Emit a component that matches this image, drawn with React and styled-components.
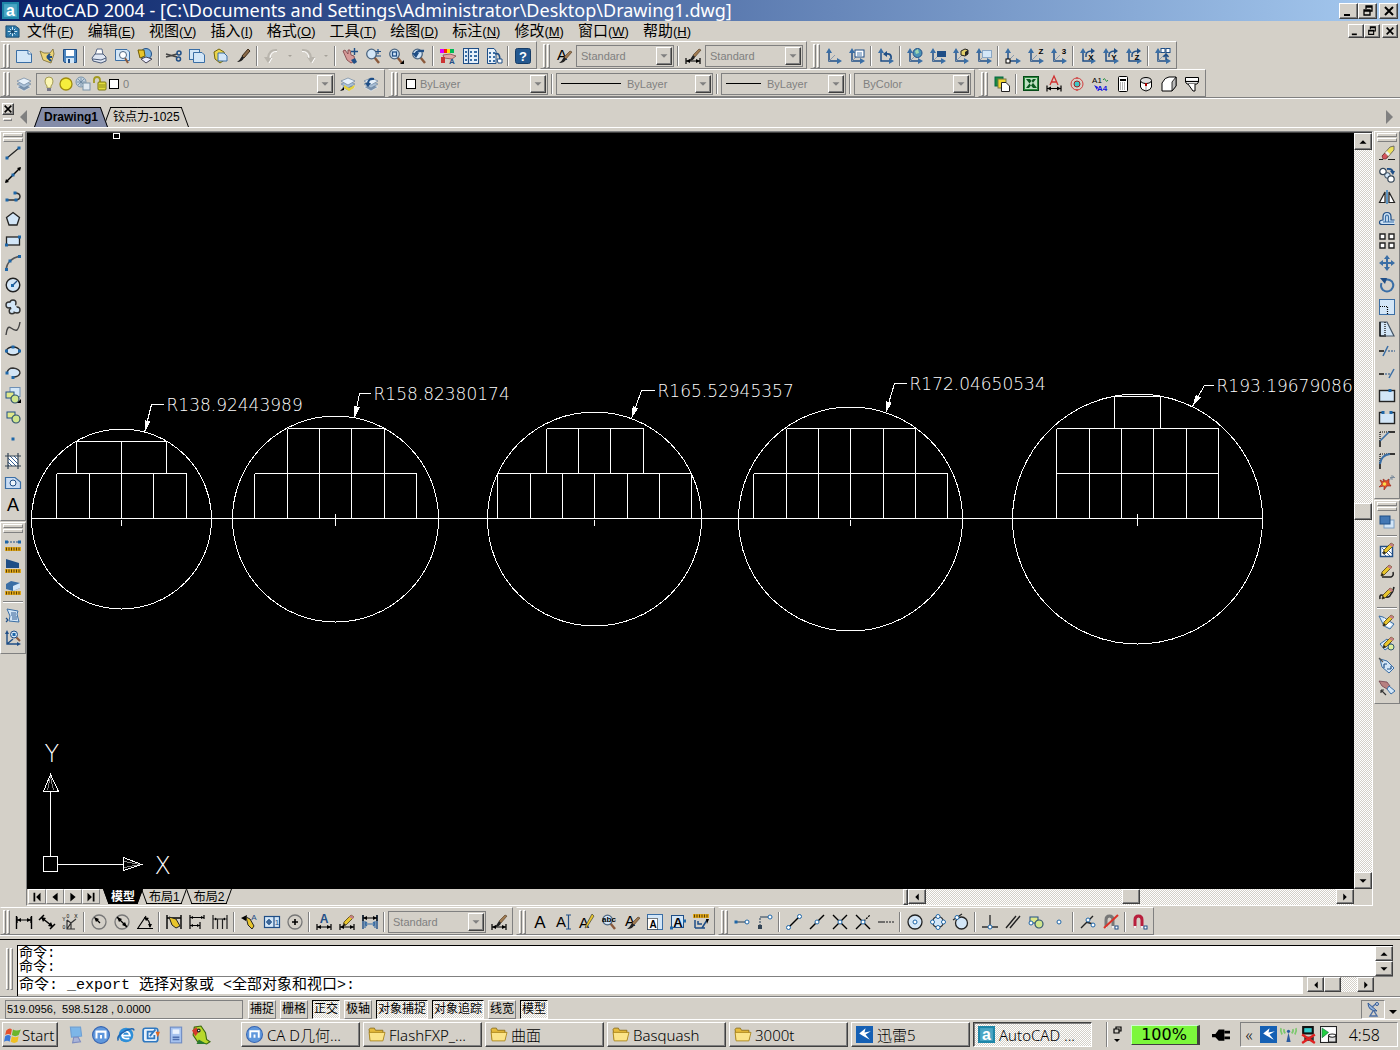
import React from 'react';
import styled, { createGlobalStyle, css } from 'styled-components';

const face = '#d4d0c8';
const shadow = '#808080';
const dark = '#404040';
const navy = '#1f4e86';
const blue = '#3a6ea5';
const pale = '#d3e6f7';
const gold = '#e8c52c';

const uiFont = '"Liberation Sans", "Noto Sans CJK SC", sans-serif';
const wideFont = '"DejaVu Sans", "Noto Sans CJK SC", sans-serif';
const taskFont = '"Noto Sans", "Noto Sans CJK SC", sans-serif';
const monoFont = '"Liberation Mono", "Noto Sans CJK SC", monospace';

const GlobalStyle = createGlobalStyle`
  * {
    box-sizing: border-box;
  }

  body {
    margin: 0;
    background: ${face};
    color: #000;
    font-family: ${uiFont};
    font-size: 12px;
  }

  button, select, input {
    margin: 0;
    padding: 0;
    border: 0;
    border-radius: 0;
    background: none;
    color: inherit;
    font: inherit;
  }
`;

const raised = css`
  border: 1px solid;
  border-color: #fff ${dark} ${dark} #fff;
  box-shadow: inset -1px -1px 0 ${shadow};
  background: ${face};
`;

const sunken = css`
  border: 1px solid;
  border-color: ${shadow} #fff #fff ${shadow};
`;

const dither = css`
  background: repeating-conic-gradient(#fff 0 25%, ${face} 0 50%) 0 0 / 2px 2px;
`;

/* ---------- icon parts ---------- */

const Dot = ({ x, y, c = '#1d66a8' }) => (
  <rect x={x - 1.5} y={y - 1.5} width="3" height="3" fill={c} />
);

const Ring = ({ x, y }) => (
  <circle cx={x} cy={y} r="2" fill="#fff" stroke="#1d66a8" />
);

const Line = ({ d, c = '#222', w = 1.2, f = 'none', dash }) => (
  <path d={d} stroke={c} strokeWidth={w} fill={f} strokeDasharray={dash} />
);

const Letter = ({ x = 8, y, s = 8, c = '#000', b, children }) => (
  <text
    x={x}
    y={y}
    fontSize={s}
    fill={c}
    fontWeight={b ? 700 : 400}
    textAnchor="middle"
    fontFamily="Liberation Sans"
  >
    {children}
  </text>
);

const Axes = ({ children, skew = true }) => (
  <>
    <Line d="M3 2V13H14" c={navy} w={1.5} />
    <path d="M0 5L3 0L6 5ZM11 10L16 13L11 16Z" fill={blue} />
    {skew && <Line d="M3 13L9 7" c="#8a9bb0" w={1} />}
    {children}
  </>
);

const Pencil = ({ c = gold }) => (
  <>
    <path d="M4 12L5 8L12 1L15 3L7 11Z" fill={c} stroke="#4a3b10" strokeWidth="0.8" />
    <path d="M12 1L15 3L14 5L10 3Z" fill="#c47f86" />
    <path d="M4 12L5 9L7 11Z" fill="#222" />
  </>
);

const Brush = () => (
  <>
    <path d="M14 1L16 2L10 9L8 7Z" fill="#a07a50" stroke="#4d3520" strokeWidth="0.6" />
    <path d="M8 7L10 9Q9 13 3 13Q6 11 8 7Z" fill="#222" />
  </>
);

const Dim = ({ y = 12.5 }) => (
  <>
    <Line d={`M1 ${y - 3}V${y + 3}M15 ${y - 3}V${y + 3}M1 ${y}H15`} c="#000" />
    <path
      d={`M1 ${y}L5 ${y - 2}V${y + 2}ZM15 ${y}L11 ${y - 2}V${y + 2}Z`}
      fill="#000"
    />
  </>
);

const Lens = ({ children }) => (
  <>
    <Line d="M9.500 9.500L14 15" c="#8b5a3c" w={2.4} />
    <circle cx="6.500" cy="6" r="4.800" fill={pale} stroke="#4d6680" strokeWidth="1.300" />
    {children}
  </>
);

const Sheets = () => (
  <>
    <path d="M1 11L8 8L15 11L8 15Z" fill="#7a92ad" stroke="#fff" strokeWidth="0.500" />
    <path d="M1 8L8 5L15 8L8 12Z" fill="#a9bfd6" stroke="#5a7694" strokeWidth="0.500" />
    <path d="M1 5L8 2L15 5L8 9Z" fill="#e6f0fa" stroke="#5a7694" strokeWidth="0.600" />
  </>
);

const Ruler = () => (
  <>
    <rect x="0" y="11" width="16" height="4" fill="#e0a81c" />
    <Line d="M1 13H16" c="#5a3d00" w={3} dash="1 1.500" />
  </>
);

const Magnet = ({ c }) => (
  <>
    <Line d="M3 14V6Q3 2 6.500 2Q10 2 10 6V14" c={c} w={3} />
    <Line d="M3 12V14M10 12V14" c="#eee" w={3} />
    <rect x="12" y="12" width="3" height="3" fill="#fff" stroke={navy} />
  </>
);

const Shapes = () => (
  <>
    <rect x="2" y="3" width="8" height="6" fill="#dfe88a" stroke={navy} />
    <circle cx="11" cy="10" r="4" fill="#cfe58d" stroke="#31566f" strokeWidth="1.200" />
  </>
);

const icons = {
  // standard
  new: <><path d="M0.500 2.500H12L15.500 6V14.500H0.500Z" fill={pale} stroke={blue} /><path d="M12 2.500V6H15.500" fill="#fff" stroke={blue} /></>,
  open: <><path d="M1 3L5 5H11L14 1L15 6L12 15L4 12Z" fill="#ecd477" stroke="#7a6a30" strokeWidth="0.800" /><Line d="M8 9H13M8 9L11 6M8 9L12 13" c={navy} w={2} /></>,
  save: <><path d="M1.500 1.500H14.500V14.500H2.500L1.500 13Z" fill="#4d86bf" stroke={navy} /><rect x="4" y="2" width="8" height="6" fill="#fff" /><rect x="4" y="10" width="8" height="5" fill={pale} /><rect x="6" y="11" width="2" height="4" fill={navy} /></>,
  print: <><path d="M4 7L6 1H11L12 7Z" fill="#fff" stroke="#5b6b88" /><path d="M1 10L4 6H12L15 9V13L10 15L2 13Z" fill="#dfe6f2" stroke="#4a5a78" /><Line d="M2 11L10 12L15 10" c="#4a5a78" w={1} /></>,
  preview: <><path d="M1.500 1.500H13L15.500 4V12.500H1.500Z" fill={pale} stroke={blue} /><Line d="M11 10L14 15" c="#8b5a3c" w={2} /><circle cx="9" cy="7" r="3.500" fill="#fff" stroke="#4d6680" /></>,
  publish: <><circle cx="9" cy="6" r="5.500" fill="#7ab0dd" stroke={navy} /><path d="M1 2H7L8 8L3 10Z" fill={gold} stroke="#705a00" /><path d="M4 11L9 9L15 11L9 15Z" fill="#eef" stroke="#445" /></>,
  cut: <><Line d="M0 6L11 9M0 9L11 6" c="#444" w={1.500} /><circle cx="13" cy="5" r="2" fill="none" stroke={navy} strokeWidth="1.500" /><circle cx="12.500" cy="11" r="2" fill="none" stroke={navy} strokeWidth="1.500" /></>,
  copy: <><rect x="0.500" y="1.500" width="10" height="10" fill={pale} stroke={blue} /><path d="M4.500 4.500H13L15.500 7V14.500H4.500Z" fill={pale} stroke={blue} /></>,
  paste: <><path d="M2 4L7 1L12 4L14 11L8 15L3 11Z" fill="#ecd64c" stroke="#74650c" /><path d="M6 5H12L15 8V13H6Z" fill={pale} stroke={blue} /></>,
  match: <><path d="M13 1L15 3L9 10L7 8Z" fill="#8a6a48" stroke="#3c2a18" /><path d="M7 8L9 10Q7 14 2 14Q5 12 7 8Z" fill="#222" /></>,
  undo: <><Line d="M13 2Q5 1 4 10" c="#b9b5ad" w={2} /><path d="M0 9H8L4 15Z" fill="#b9b5ad" /><Line d="M13 3.500Q7 3 6 10M5 15L8 10" c="#fff" w={1} /></>,
  redo: <><Line d="M2 2Q10 1 11 10" c="#b9b5ad" w={2} /><path d="M7 9H15L11 15Z" fill="#b9b5ad" /><Line d="M2 3.500Q8 3 9 10M12 15L15 10" c="#fff" w={1} /></>,
  small: <path d="M6 7H10L8 9Z" fill="#a5a199" />,
  pan: <><path d="M1 3L3 2L6 6L6 2L8 2L9 7L12 8L13 13L9 15L5 12Z" fill="#d59a98" stroke="#7a3d42" strokeWidth="0.800" /><path d="M9 12L13 10L15 14L12 16Z" fill={navy} /><Line d="M12.500 0V7M9 3.500H16" c={navy} w={1.400} /></>,
  zoom: <Lens><Line d="M13 1V6M10.500 3.500H16M11 8H16" c={navy} w={1.200} /></Lens>,
  zoomwin: <Lens><rect x="4.500" y="4" width="4" height="4" fill={pale} stroke={navy} strokeWidth="1.300" /><path d="M16 12V16H12Z" /></Lens>,
  zoomprev: <Lens><Line d="M4 7Q5 2 13 3" c={navy} w={2.400} /><path d="M1 5L8 5L5 10Z" fill={navy} /></Lens>,
  props: <><path d="M0 1H4V5H0Z" fill="#d0f" /><path d="M4 1H7V5H4Z" fill="#f20" /><path d="M7 1H10V5H7Z" fill="#fd0" /><path d="M10 1H14V5H10Z" fill="#0b5" /><path d="M3 7L10 6L16 8L12 11L4 10Z" fill="#e3a7a4" stroke="#7a3d42" strokeWidth="0.700" /><path d="M1 9H5V15H1Z" fill="#c33" /><Letter x={12} y={16} s={8} c={navy} b>A</Letter></>,
  center: <><rect x="0.500" y="0.500" width="15" height="15" fill="#e6f0fa" stroke={navy} /><Line d="M5.500 1V15" c={navy} />{[3, 7, 11].map(y => <path key={y} d={`M2 ${y}h2v2h-2zM7 ${y}h2v2h-2zM11 ${y}h3v2h-3z`} fill={blue} />)}</>,
  palette: <><path d="M1.500 0.500H8L10 3V15.500H1.500Z" fill="#e6f0fa" stroke={navy} />{[4, 8, 12].map(y => <path key={y} d={`M3 ${y}h2v2h-2zM7 ${y}h2v2h-2z`} fill={blue} />)}<Line d="M9 6Q14 4 14 12" c={navy} w={1.600} /><path d="M11 11H16V15H12Z" fill="#fff" stroke={navy} /></>,
  help: <><rect x="0.500" y="0.500" width="15" height="15" rx="2" fill="#24588f" stroke="#163c66" /><Letter y={13} s={13} c="#fff" b>?</Letter></>,
  // styles
  textstyle: <><Letter x={6} y={12} s={15}>A</Letter><g transform="translate(0 2)"><Brush /></g></>,
  dimstyle: <><Brush /><Dim y={13} /></>,
  // ucs
  ucs: <Axes />,
  ucsdlg: <Axes><rect x="6" y="2" width="9" height="7" fill="#fff" stroke={navy} /><Line d="M8 5H13M8 7H13" c={blue} w={0.9} /></Axes>,
  ucsprev: <Axes skew={false}><Line d="M13 11Q14 5 8 6" c={navy} w={1.800} /><path d="M5 6L9 3V9Z" fill={navy} /></Axes>,
  ucsworld: <Axes><circle cx="10.500" cy="5" r="4.500" fill="#4b93b5" stroke={navy} /><path d="M8 3L11 1L12 5L9 6Z" fill="#9fd6b0" /></Axes>,
  ucsobj: <Axes><rect x="7" y="3" width="9" height="6" fill={navy} /></Axes>,
  ucsface: <Axes><path d="M8 3L12 1L15 2V6L12 8L8 7Z" fill="#e2cf6a" stroke="#222" /><path d="M12 4V8L15 6V2Z" fill="#222" /></Axes>,
  ucsview: <Axes><rect x="6.500" y="2.500" width="9" height="7" fill={pale} stroke="#8aa6c4" /></Axes>,
  ucsorigin: <Axes><rect x="1" y="11" width="4" height="4" fill="#fff" stroke="#000" /></Axes>,
  ucsz: <Axes><Letter x={13} y={6} s={8} b>Z</Letter></Axes>,
  ucs3: <Axes><Letter x={13} y={6} s={8} b>3</Letter></Axes>,
  ucsx: <Axes skew={false}><Line d="M6 9Q5 3 12 3" c={navy} w={1.500} /><path d="M11 0L15 3L11 6Z" fill={navy} /><Letter x={11} y={12} b>X</Letter></Axes>,
  ucsy: <Axes skew={false}><Line d="M6 9Q5 3 12 3" c={navy} w={1.500} /><path d="M11 0L15 3L11 6Z" fill={navy} /><Letter x={11} y={12} b>Y</Letter></Axes>,
  ucszz: <Axes skew={false}><Line d="M6 9Q5 3 12 3" c={navy} w={1.500} /><path d="M11 0L15 3L11 6Z" fill={navy} /><Letter x={11} y={12} b>Z</Letter></Axes>,
  ucsapply: <Axes><rect x="6" y="0.500" width="4" height="4" fill="#fff" stroke={navy} /><rect x="11" y="0.500" width="4" height="4" fill="#fff" stroke={navy} /><Line d="M11 12V7M8.500 9L11 6L13.500 9" c={navy} w={1.500} /></Axes>,
  // layers
  layers: <Sheets />,
  laycur: <><Sheets /><path d="M4 9L9 12L15 9L14 12L9 15L4 12Z" fill="#e6d23c" /><path d="M0 15L4 11V14Z" fill="#000" /></>,
  layprev: <><Sheets /><Line d="M5 8Q5 2 11 3" c={navy} w={2.200} /><path d="M2 7H8L5 11Z" fill={navy} /></>,
  bulb: <><path d="M4 5Q4 1 8 1Q12 1 12 5Q12 8 10 10V12H6V10Q4 8 4 5Z" fill="#fbf6b4" stroke="#a39b52" /><path d="M6 12H10V15H6Z" fill="#778" /></>,
  sun: <circle cx="8" cy="8" r="6" fill="#f6ee3c" stroke="#a08c10" strokeWidth="1.300" />,
  freeze: <><circle cx="6" cy="6" r="5" fill="#c3d3df" stroke="#7b93a8" /><Line d="M6 2V10M2 6H10M3 3L9 9M9 3L3 9" c="#6b86a0" w={0.8} /><rect x="8" y="7" width="7" height="7" fill="#dfe8ef" stroke="#7b93a8" /></>,
  lock: <><Line d="M2 7V4Q2 1 5 1Q8 1 8 4V8" c="#a39a20" w={1.800} /><rect x="6" y="6" width="8" height="8" rx="1" fill="#e2dc3e" stroke="#7c7610" /><Line d="M7 9H13M7 11H13" c="#7c7610" w={0.8} /></>,
  // express
  sheetset: <><rect x="1" y="1" width="8" height="9" fill="#1d8a3c" stroke="#064" /><rect x="4" y="3" width="8" height="9" fill="#f1d531" stroke="#774" /><path d="M7.500 6.500H12L15.500 10V15.500H7.500Z" fill="#fff" stroke="#222" /></>,
  excel: <><rect x="0.500" y="0.500" width="15" height="14" fill="#2c8a3e" stroke="#064a18" /><rect x="2" y="2" width="12" height="11" fill="#bfe0c2" /><path d="M3 3H7L14 12H10ZM13 3H10L3 12H6Z" fill="#0b5a20" /></>,
  dimtext: <><Line d="M4 9L8 0L12 9M5.500 6H10.500" c="#d03030" w={1.300} /><Dim y={12.500} /></>,
  target: <><circle cx="8" cy="8" r="6" fill="none" stroke="#d04040" /><circle cx="8" cy="8" r="3" fill="#3fc8c8" stroke="#a02020" /><Line d="M8 1V3M8 13V15" c="#d04040" /></>,
  a1a4: <><Letter x={5} y={7} s={8}>A1</Letter><Line d="M11 4Q12.500 1 13.500 4T16 4" c="#2a9040" w={1} /><Letter x={10} y={15} s={8} c="#1414e0" b>A4</Letter><path d="M2 9L5 14L6 11Z" fill="#1414e0" /></>,
  calc: <><rect x="3.500" y="0.500" width="9" height="15" rx="1" fill="#fff" stroke="#000" /><path d="M5 3H11V5H5Z" fill="#000" />{[7, 9, 11, 13].map(y => <Line key={y} d={`M5 ${y}H11`} c="#666" w={1} dash="1 1" />)}</>,
  tank: <><path d="M2.500 5V11Q3 14 8 15Q13 14 13.500 11V5Z" fill="#fff" stroke="#000" /><ellipse cx="8" cy="4.500" rx="5.500" ry="3" fill="#ddd" stroke="#000" /><path d="M7 7H9V10H7Z" fill="#a00" /><Line d="M8 10V14" c="#aaa" /></>,
  solid: <><path d="M1 15V7Q4 1 8 1H15V10L11 15Z" fill="#fff" stroke="#000" /><path d="M11 15V6L15 1V10Z" fill="#bbb" stroke="#000" strokeWidth="0.800" /></>,
  funnel: <><path d="M1.500 1.500H14.500V6L13 8H3L1.500 6Z" fill="#fff" stroke="#000" /><path d="M4 8L9 15H11V8" fill="#fff" stroke="#000" /><Line d="M1.500 5.500H14.500" c="#000" /></>,
  // draw
  line: <><Line d="M2 13L14 3" /><Dot x={2} y={13} /><Dot x={14} y={3} /></>,
  xline: <><Line d="M1 15L15 1" c="#000" w={1.500} /><path d="M16 0L15 4L12 1ZM0 16L1 12L4 15Z" /><Dot x={8} y={8} /></>,
  pline: <><Line d="M2 11H10Q15 11 15 7.500Q15 4 10 4" c="#333" w={1.500} /><Dot x={2} y={11} /><Dot x={11} y={11} /><Dot x={10} y={4} /></>,
  polygon: <path d="M8 1.500L14.500 6.500L12 14H4L1.500 6.500Z" fill={pale} stroke="#222" strokeWidth="1.300" />,
  rect: <><rect x="1.500" y="4" width="13" height="8" fill={pale} stroke="#222" strokeWidth="1.300" /><Dot x={1.500} y={12} /><Dot x={14.500} y={4} /></>,
  arc: <><Line d="M1 15Q2 4 15 1" c="#555" w={1.400} /><Dot x={1.500} y={14.500} /><Dot x={5} y={6} /><Dot x={14.500} y={1.500} /></>,
  circle: <><circle cx="8" cy="8" r="6.800" fill={pale} stroke="#222" strokeWidth="1.400" /><Line d="M8 8L12 4" c={navy} /><Dot x={7.500} y={8.500} /></>,
  cloud: (
    <>
      <g fill={pale} stroke="#333" strokeWidth="1.400">
        <circle cx="4" cy="6" r="3" />
        <circle cx="8" cy="4" r="3" />
        <circle cx="7" cy="12" r="2.800" />
        <circle cx="12" cy="11" r="3" />
      </g>
      <path d="M4 4L8 3L11 7L13 11L11 13L7 12L6 8L3 7Z" fill={pale} />
    </>
  ),
  spline: <Line d="M1 14Q2 4 6 7T12 9Q14 7 15 1" c="#444" w={1.400} />,
  ellipse: <><ellipse cx="8" cy="8" rx="6.500" ry="4" fill={pale} stroke="#222" strokeWidth="1.300" /><Dot x={1.500} y={8} /><Dot x={14.500} y={8} /><Dot x={8} y={4} /></>,
  earc: <><path d="M2 8Q3 3 8 3Q15 4 15 8Q14 12 8 12" fill={pale} stroke="#333" strokeWidth="1.300" /><Dot x={2} y={8} /><Dot x={8} y={12.500} /></>,
  insert: <><rect x="5" y="0.500" width="10" height="9" fill={pale} stroke="#6d8fb5" /><g transform="translate(-1 2)"><Shapes /></g><path d="M16 12V16H12Z" /></>,
  block: <Shapes />,
  point: <Dot x={8} y={8} />,
  hatch: <><rect x="3" y="3" width="10" height="10" fill="#fff" /><Line d="M3 5L11 13M3 9L7 13M5 3L13 11M9 3L13 7M3 12L4 13" c={navy} w={0.9} /><Line d="M0 3H16M0 13H16M3 0V16M13 0V16" c="#345" w={1.200} /></>,
  region: <><path d="M0.500 2.500H10L15.500 7V13.500H0.500Z" fill="#c9dcf3" stroke={blue} strokeWidth="1.200" /><circle cx="8" cy="8" r="3" fill="#eef5fc" stroke={navy} /></>,
  mtext: <Letter y={14} s={18}>A</Letter>,
  // inquiry
  dist: <><Line d="M2 6H14" c={navy} dash="2 1" /><Dot x={1.500} y={6} /><Dot x={14.500} y={6} /><Ruler /></>,
  area: <><path d="M1 1L14 5V10H1Z" fill={navy} /><Ruler /></>,
  mass: <><path d="M1 4L6 1L15 3V8L8 11L1 9Z" fill={blue} /><path d="M8 6L15 3V8L8 11Z" fill={pale} /><Ruler /></>,
  list: <><path d="M2 1L13 3L12 6L14 14L4 13L5 8Z" fill={pale} stroke={blue} /><Line d="M6 5H11M6 7H11M7 9H12M7 11H12" c={navy} w={0.9} /><Line d="M1 10L3 12M1 14L3 12" c={navy} /></>,
  id: <><Line d="M2 2V14H14M2 14L8 9" c={navy} w={1.400} /><path d="M0 4L2 0L4 4ZM12 12L16 14L12 16Z" fill={navy} /><Line d="M11 7L15 11" c="#8b5a3c" w={2} /><circle cx="9" cy="4.500" r="3.500" fill={pale} stroke={navy} /><Dot x={9} y={4.500} /></>,
  // modify
  erase: <><path d="M3 11L11 2L15 1V5L8 13Z" fill="#ece05c" stroke="#555" strokeWidth="0.800" /><path d="M3 11L6 8L9 11L7 14L4 14Z" fill="#d3545c" stroke="#622" strokeWidth="0.600" /><path d="M6 8L8 6L11 9L9 11Z" fill="#eee" /><Line d="M0 14.500H4M9 14.500H16" c="#222" w={1} /></>,
  copyobj: <><circle cx="4" cy="4.500" r="3.200" fill="#fff" stroke="#345" strokeWidth="1.200" /><circle cx="8.500" cy="8.500" r="2.800" fill={pale} stroke="#345" /><circle cx="12" cy="12" r="3.200" fill="#fff" stroke="#345" strokeWidth="1.200" /><Line d="M8 2Q13 1 14 5" c={navy} w={1.800} /><path d="M11 4H16L14 8Z" fill={navy} /></>,
  mirror: <><path d="M6 3V13.500H0.500ZM10 3V13.500H15.500Z" fill="#fff" stroke="#222" strokeWidth="1.200" /><Line d="M8 1V15" c="#2a7bc0" w={1.400} /></>,
  offset: <><path d="M15.500 13.500H3Q0.500 13.500 0.500 11.500Q0.500 9 4 9V6Q4 1.500 8 1.500Q12 1.500 12 6V9H15.500" fill="#cfe3f5" stroke={navy} strokeWidth="1.200" /><Line d="M15 11H4M6.500 11V6.500Q6.500 4 8 4Q9.500 4 9.500 6.500V11" c={blue} w={1.200} /></>,
  array: <path d="M1 1H6V6H1ZM10 1H15V6H10ZM1 10H6V15H1ZM10 10H15V15H10Z" fill="#fff" stroke="#222" strokeWidth="1.400" />,
  move: <><Line d="M8 2V14M2 8H14" c={blue} w={2} /><path d="M8 0L11 4H5ZM8 16L11 12H5ZM0 8L4 5V11ZM16 8L12 5V11Z" fill={blue} /></>,
  rotate: <><Line d="M5 3.500Q9 1 13 4.500Q16 9 12 13Q8 16 4 13Q1 10 2.500 6" c={blue} w={2} /><path d="M1 1L8 1L6 7Z" fill={navy} /></>,
  scale: <><rect x="0.500" y="0.500" width="15" height="15" fill={pale} stroke={blue} /><Line d="M1 7.500H8.500V15" c="#000" dash="1 1" /></>,
  stretch: <><path d="M1 1H8L15 15H1Z" fill={pale} stroke="#456" strokeWidth="1.200" /><Line d="M6 1V15" c="#000" dash="1 1" /><Line d="M1 1V15H7" c="#000" /></>,
  trim: <><Line d="M0 8H5" c="#000" w={1.400} /><Line d="M9 8H16" c={navy} dash="2 1" /><Line d="M4 13L9 3" c={blue} w={1.500} /></>,
  extend: <><Line d="M0 9H5" c="#000" w={1.400} /><Line d="M6 9H11" c={navy} dash="2 1" /><Line d="M10 13L15 4" c={blue} w={1.500} /></>,
  breakpt: <><rect x="0.500" y="3.500" width="15" height="11" fill={pale} stroke="#222" strokeWidth="1.400" /><Dot x={11} y={3.500} /></>,
  break: <><rect x="0.500" y="3.500" width="15" height="11" fill={pale} stroke="#222" strokeWidth="1.400" /><path d="M5 2H11V5H5Z" fill={face} /><Dot x={4} y={3.500} /><Dot x={12} y={3.500} /></>,
  chamfer: <><Line d="M1 1H9M1 1V9" c="#000" dash="1 1" /><Line d="M9 1H16M1 9V16" c="#000" w={1.400} /><Line d="M1 10L10 1" c={blue} w={1.600} /></>,
  fillet: <><Line d="M1 1H9M1 1V9" c="#000" dash="1 1" /><Line d="M9 1H16M1 9V16" c="#000" w={1.400} /><Line d="M1 11Q2 2 11 1" c={blue} w={2} /></>,
  explode: <><path d="M4 4L7 6L10 4L10 8L12 11L8 11L5 15L5 11L0 12L3 9L1 5L5 7Z" fill="#e2502c" stroke="#8a1c10" strokeWidth="0.600" /><circle cx="5.500" cy="9" r="1.800" fill="#f8dc4c" /><Line d="M10 5L15 1M13 0V5M11 2.500H16" c="#789" w={0.9} /></>,
  // modify II
  order: <><rect x="5" y="6" width="10" height="8" fill={pale} stroke="#7c9ec2" /><rect x="1" y="2" width="10" height="8" fill="#4478b4" stroke={navy} /></>,
  edhatch: <><rect x="1.500" y="4.500" width="12" height="10" fill="#fff" stroke={navy} strokeWidth="1.500" /><Line d="M3 6L11 14M3 10L7 14M7 6L13 12" c={navy} w={0.8} /><Pencil /></>,
  edpline: <><Line d="M3 13H12Q15 12 14 8" c="#222" w={1.500} /><g transform="translate(-2 0)"><Pencil /></g></>,
  edspline: <><Line d="M1 13Q0 7 5 10T12 8Q14 6 15 1" c="#222" w={1.600} /><g transform="translate(-1 1)"><Pencil /></g></>,
  edattr: <><path d="M0 2L4 3L15 10L11 15L5 12Z" fill={pale} stroke={blue} /><path d="M5 4L13 11L10 13L5 10Z" fill="#fff" /><Pencil /></>,
  blkattr: <><path d="M1 8L8 3L13 9L6 14Z" fill={pale} stroke={blue} /><Pencil /><circle cx="12" cy="11" r="3" fill="#dcee9c" stroke="#31566f" /></>,
  sync: <><path d="M1 1L8 3L15 10L10 15L3 9Z" fill={pale} stroke={blue} /><Line d="M5 6V10M5 6H8M12 11H8M12 11V8" c={navy} /><Line d="M0 0L4 4" c="#555" /></>,
  extract: <><path d="M0 1L8 2L11 6L8 9L3 6Z" fill="#b88080" stroke="#634" strokeWidth="0.700" /><path d="M10 6L16 11L12 14L8 9Z" fill={pale} stroke={blue} /><Line d="M7 15L2 10M2 10V13M2 10H5" c="#333" /></>,
  // dimension
  dlin: <><Line d="M0.500 2V15M15.500 2V15" c="#000" w={1.400} /><Dim y={6} /></>,
  dali: <><Line d="M0 6L5 1M11 15L16 10M3 4L13 12" c="#000" w={1.500} /><path d="M2 3L7 4L4 8ZM14 13L9 12L12 8Z" /></>,
  dord: <><Line d="M5 6V15H13M5 15L9 9L14 5M5 6L9 9V15" c="#333" /><Letter x={2} y={7} s={5}>Y</Letter><Letter x={2} y={15} s={5}>0</Letter><Letter x={6} y={4} s={5}>0</Letter><Letter x={14} y={4} s={5}>X</Letter></>,
  drad: <><circle cx="8" cy="8" r="7" fill="none" stroke="#777" strokeWidth="1.300" /><Line d="M9 9L5 5" c="#000" /><path d="M3 3L8 5L5 8Z" /></>,
  ddia: <><circle cx="8" cy="8" r="7" fill="none" stroke="#777" strokeWidth="1.300" /><Line d="M3 3L13 13" c="#000" /><path d="M3 3L8 5L5 8ZM13 13L8 11L11 8Z" /></>,
  dang: <><Line d="M0 14.500H16M1 14L9 2M8 4Q13 6 13 13" c="#000" /><path d="M7 3L12 4L9 7ZM13 14L11 10H15Z" /></>,
  dquick: <><Line d="M1 1V15M15 1V15M1 4H15" c="#000" w={1.400} /><path d="M3 3L10 5L14 12L10 14L6 11Z" fill={gold} stroke="#222" /></>,
  dbase: <><Line d="M1 1V15M11 8V15M15 1V5M1 3.500H15M1 11.500H11" c="#000" /><path d="M1 3.500L4 2V5ZM15 3.500L12 2V5ZM1 11.500L4 10V13ZM11 11.500L8 10V13Z" /></>,
  dcont: <><Line d="M1 1V15M5.500 5V15M10.500 5V15M15 1V15M1 5H15" c="#222" /><path d="M5 5L3 3.500V6.500ZM11 5L13 3.500V6.500Z" /></>,
  leader: <><path d="M0 4L6 1L5 7Z" /><path d="M5 3L9 5L13 12L11 15L7 11Z" fill={gold} stroke="#222" /><Letter x={13} y={6} s={8} c={navy}>A</Letter></>,
  tol: <><rect x="0.500" y="2.500" width="15" height="11" fill={pale} stroke={navy} strokeWidth="1.200" /><Line d="M10 3V13M2 8H8M5 5V11" c={navy} /><circle cx="5" cy="8" r="2" fill="none" stroke={navy} /><Letter x={13} y={11} s={8} c={navy}>1</Letter></>,
  cmark: <><circle cx="8" cy="8" r="7" fill="none" stroke="#777" strokeWidth="1.300" /><Line d="M8 5V11M5 8H11" c="#000" w={1.600} /></>,
  dedit: <><Letter y={9} s={12} c={navy} b>A</Letter><Dim y={13} /></>,
  dtedit: <><Pencil /><Dim y={13} /></>,
  dupd: <><Line d="M1 1V15M15 1V15" c={navy} w={1.400} /><Dim y={4} /><Line d="M3 10H13M5 8L3 10L5 12M11 8L13 10L11 12M3 7V14M13 7V14" c={blue} w={1.200} /></>,
  // text
  txt: <Letter y={14} s={17}>A</Letter>,
  dtext: <><Letter x={6} y={13} s={15}>A</Letter><Line d="M11 1H16M11 15H16M13.500 1V15" c={navy} /></>,
  tedit: <><Letter x={6} y={14} s={15}>A</Letter><path d="M14 0L16 2L9 13L7 14L8 11Z" fill={gold} stroke="#443" strokeWidth="0.700" /></>,
  find: <><Lens /><Letter x={8} y={8} s={8} b>abc</Letter></>,
  tscale: <><rect x="0.500" y="0.500" width="15" height="15" fill={pale} stroke={blue} /><rect x="0.500" y="4.500" width="10" height="11" fill="#fff" stroke="#000" strokeDasharray="1 1" /><Letter x={6} y={14} s={10} b>A</Letter></>,
  tjust: <><rect x="1.500" y="1.500" width="12" height="12" fill={pale} stroke={navy} /><Letter x={8} y={13} s={13} b>A</Letter><Dot x={1.500} y={14} /><Dot x={14.500} y={7} /></>,
  tconv: <><g transform="translate(0 -11)"><Ruler /></g><Line d="M2 6V14M2 14H12M5 7V10H9M14 6L9 14" c={navy} w={1.500} /><path d="M13 5L16 5L14 10Z" /></>,
  // object snap
  track: <><Line d="M2 8H13" c="#567" w={1.400} /><Dot x={2} y={8} /><Ring x={13} y={8} /></>,
  from: <><Line d="M3 12V3" c="#567" w={1.400} dash="2 1" /><Line d="M3 3H12" c="#567" w={1.400} /><rect x="1" y="11" width="4" height="4" fill="#345" /><Ring x={13} y={3} /></>,
  sEnd: <><Line d="M3 13L13 3" c="#000" w={1.400} /><Ring x={2.500} y={13.500} /><Ring x={13.500} y={2.500} /></>,
  sMid: <><Line d="M1 15L15 1" c="#000" w={1.400} /><Ring x={8} y={8} /></>,
  sInt: <><Line d="M1 15L15 1M1 1L15 15" c="#000" w={1.400} /><Ring x={8} y={8} /></>,
  sApp: <><Line d="M1 15L7 9M1 1L15 15" c="#000" w={1.400} /><Line d="M9 7L15 1" c="#000" dash="2 1" /><Ring x={8} y={8} /></>,
  sExt: <><Line d="M0 8H7" c="#555" w={1.600} /><Line d="M8 8H16" c="#555" w={1.600} dash="2 1" /></>,
  sCen: <><circle cx="8" cy="8" r="7" fill={pale} stroke="#222" strokeWidth="1.300" /><Ring x={8} y={8} /></>,
  sQua: <><circle cx="8" cy="8" r="5.500" fill={pale} stroke="#222" strokeWidth="1.200" /><Ring x={8} y={2.500} /><Ring x={8} y={13.500} /><Ring x={2.500} y={8} /><Ring x={13.500} y={8} /></>,
  sTan: <><circle cx="8.500" cy="9" r="6" fill={pale} stroke="#222" strokeWidth="1.300" /><Line d="M0 6L9 0" c="#222" /><Ring x={4} y={3.500} /></>,
  sPer: <><Line d="M0 13H16M8 1V13" c="#333" w={1.400} /><Ring x={8} y={13} /></>,
  sPar: <Line d="M1 14L11 2M5 14L15 2" c="#222" w={1.400} />,
  sIns: <><Shapes /><Ring x={3} y={9} /></>,
  sNod: <Ring x={8} y={8} />,
  sNea: <><Line d="M1 14L13 2M6 8L13 10" c="#222" w={1.400} /><Ring x={8} y={6} /><Ring x={13} y={11} /></>,
  sNone: <><Magnet c="#777" /><Line d="M1 14L15 1" c="#dc3228" w={2} /></>,
  sSet: <Magnet c="#b81e3c" />,
  // shell
  acad: <><rect width="16" height="16" fill="#1e86a8" /><rect x="2" y="2" width="12" height="12" fill="#4ba6c4" /><Letter y={13} s={15} c="#fff" b>a</Letter></>,
  dwg: <><path d="M1 2H11L15 5V14H1Z" fill="#2c78a8" stroke="#174a70" /><Line d="M8 3V13M3 8H13M5 5L11 11M11 5L5 11" c="#dff4ff" w={1} /><circle cx="8" cy="8" r="2" fill="#174a70" /></>,
  win: <><path d="M2 4Q5 1 7 3L6 8Q4 6 1 8Z" fill="#e5502c" /><path d="M8 3Q11 5 15 3L13 8Q10 10 7 8Z" fill="#6cb52c" /><path d="M1 9Q4 7 6 9L5 14Q3 12 0 14Z" fill="#3a78d8" /><path d="M7 9Q10 11 13 9L12 14Q9 16 6 14Z" fill="#f0c020" /></>,
  desk: <><path d="M3 1H12L13 9L4 10Z" fill="#7db6e8" stroke="#6fa0d4" /><path d="M6 10H10L12 14L5 15Z" fill="#a9b4d8" stroke="#7d8cc0" /></>,
  max: <><circle cx="8" cy="8" r="7.500" fill="#5f97dc" stroke="#3865b0" /><Line d="M4 11V5H12V11M8 8V11" c="#fff" w={1.800} /></>,
  ie: <><circle cx="8" cy="8" r="6.500" fill="#2f8fd8" /><Line d="M4.500 8.500H11.500Q11 5 8 5Q5 5 4.500 8.500Q5 12 11 11" c="#fff" w={1.600} /><Line d="M1 13Q-1 9 8 4Q15 1 15 4" c="#1d64b0" w={1.300} /></>,
  outlook: <><rect x="1" y="2" width="13" height="12" rx="2" fill="#e7f1fb" stroke="#2f78c0" strokeWidth="1.500" /><Line d="M10 5H5V11H11V8M12 3L7 9" c="#2f78c0" w={1.600} /><path d="M12 5H16L14 10Z" fill="#e06820" /></>,
  pda: <><rect x="3" y="1" width="10" height="14" fill="#a6c2ee" stroke="#6f8cc4" /><rect x="5" y="3" width="6" height="4" fill="#eaf2fd" /><Line d="M5 10H11M5 12H11" c="#4f70b0" /></>,
  parrot: <><path d="M2 1L8 0L12 6L13 12L16 14L13 16L5 14L1 8Z" fill="#b8d82c" stroke="#3c6a10" /><path d="M0 4L4 1L6 5L3 9Z" fill="#d43a2c" /><path d="M6 12L13 16H4Z" fill="#2a7a30" /><circle cx="6" cy="4" r="1.200" fill="#fff" stroke="#222" /></>,
  folder: <><path d="M1 3L2 2H6L7 4H14V13H2Z" fill="#e6bb3c" stroke="#8a6a10" strokeWidth="0.800" /><path d="M1 6H16L14 14H2Z" fill="#fbe489" stroke="#a88218" strokeWidth="0.800" /></>,
  thunder: <><rect width="16" height="16" fill="#1560b4" /><path d="M3 7L9 2L8 6L14 5L9 8L13 13L6 9Z" fill="#fff" /></>,
  signal: <><path d="M6 15L8 6L10 15Z" fill="#2a5aa0" /><circle cx="8" cy="5" r="1.500" fill="#2a5aa0" /><Line d="M1 2Q0 5 2 8M4 3Q3 5 5 7M15 2Q16 5 14 8M12 3Q13 5 11 7" c="#7cc86c" w={1.600} /></>,
  net: <><rect x="2" y="0" width="11" height="8" fill="#111" /><rect x="4" y="2" width="7" height="4" fill="#3cc" /><rect x="4" y="10" width="9" height="4" fill="#333" /><Line d="M2 8L14 16M14 8L2 16" c="#e02020" w={2.200} /></>,
  disk: <><rect x="0.500" y="0.500" width="15" height="15" fill="#fff" stroke="#222" /><path d="M2 2L8 6L2 11Z" fill="#20d040" stroke="#063" strokeWidth="0.600" /><path d="M8 9H15V15H8Z" fill="#ddd" stroke="#222" /><ellipse cx="11.500" cy="9" rx="3.500" ry="1.500" fill="#fff" stroke="#222" /></>,
  plug: <><path d="M0 7H3L6 3H11V13H6L3 10H0Z" /><Line d="M11 5.500H16M11 10.500H16" c="#000" w={2.400} /></>,
  dish: <><path d="M3 2Q3 10 12 10Z" fill="#8fb0dc" stroke="#345a94" /><Line d="M7 6L12 2M8 10L5 15H12L9 10" c="#4c6ea4" w={1.400} /><circle cx="12" cy="3" r="1.500" fill="#c7d8ef" stroke="#345a94" /></>,
};

const IconSvg = styled.svg`
  display: block;
  flex: none;
  width: ${p => p.$size || 16}px;
  height: ${p => p.$size || 16}px;
  overflow: visible;
`;

const Icon = ({ name, size }) => (
  <IconSvg viewBox="0 0 16 16" $size={size} aria-hidden="true">
    {icons[name]}
  </IconSvg>
);

const Arrow = ({ dir }) => {
  const d = {
    up: 'M4 10H12L8 6Z',
    down: 'M4 6H12L8 10Z',
    left: 'M10 4V12L6 8Z',
    right: 'M6 4V12L10 8Z',
    first: 'M12 3V13L7 8ZM4 3H6V13H4Z',
    prev: 'M11 3V13L5 8Z',
    next: 'M5 3V13L11 8Z',
    last: 'M4 3V13L9 8ZM10 3H12V13H10Z',
  }[dir];
  return (
    <IconSvg viewBox="0 0 16 16" $size={14} aria-hidden="true">
      <path d={d} fill="currentColor" />
    </IconSvg>
  );
};

/* ---------- window frame ---------- */

const Window = styled.div`
  display: flex;
  flex-direction: column;
  min-height: 100vh;
  background: ${face};
`;

const TitleBar = styled.header`
  display: flex;
  align-items: center;
  gap: 4px;
  height: 21px;
  padding: 0 2px;
  background: linear-gradient(90deg, #0a246a, #a6caf0);
  color: #fff;
`;

const Title = styled.h1`
  flex: 1;
  margin: 0;
  font: 400 18px/21px ${taskFont};
  white-space: nowrap;
`;

const Caption = styled.div`
  display: flex;
  margin-left: auto;

  button:last-child {
    margin-left: 2px;
  }
`;

const CaptionButton = styled.button`
  ${raised}
  display: flex;
  align-items: center;
  justify-content: center;
  width: ${p => (p.$small ? 16 : 19)}px;
  height: ${p => (p.$small ? 14 : 16)}px;
  color: #000;
`;

const WindowButtons = ({ small }) => (
  <Caption>
    <CaptionButton $small={small} aria-label="Minimize">
      <IconSvg viewBox="0 0 12 12" $size={small ? 10 : 12}><path d="M1 9H7V11H1Z" /></IconSvg>
    </CaptionButton>
    <CaptionButton $small={small} aria-label="Restore">
      <IconSvg viewBox="0 0 12 12" $size={small ? 10 : 12}>
        <path d="M4 4V1H10V6H8M4 2H10M2 5H8V10H2ZM2 6H8" fill="none" stroke="#000" strokeWidth="1.300" />
      </IconSvg>
    </CaptionButton>
    <CaptionButton $small={small} aria-label="Close">
      <IconSvg viewBox="0 0 12 12" $size={small ? 10 : 12}>
        <path d="M2 2L10 10M10 2L2 10" stroke="#000" strokeWidth="2" />
      </IconSvg>
    </CaptionButton>
  </Caption>
);

const MenuBar = styled.nav`
  display: flex;
  align-items: center;
  gap: 7px;
  height: 20px;
  padding: 0 2px 0 5px;
  white-space: nowrap;
`;

const MenuList = styled.div`
  display: flex;
  gap: 14px;
`;

const MenuItem = styled.button`
  font: 15px/18px ${uiFont};

  span {
    font-size: 13px;
  }
`;

const menus = [
  ['文件', 'F'],
  ['编辑', 'E'],
  ['视图', 'V'],
  ['插入', 'I'],
  ['格式', 'O'],
  ['工具', 'T'],
  ['绘图', 'D'],
  ['标注', 'N'],
  ['修改', 'M'],
  ['窗口', 'W'],
  ['帮助', 'H'],
];

/* ---------- toolbars ---------- */

const ToolRow = styled.div`
  display: flex;
  gap: 3px;
  height: 28px;
`;

const Bar = styled.div`
  display: flex;
  flex-direction: ${p => (p.$vertical ? 'column' : 'row')};
  align-items: center;
  border: 1px solid;
  border-color: #fff ${shadow} ${shadow} ${p => (p.$vertical ? '#fff' : face)};
  padding: ${p => (p.$vertical ? '0 0 4px' : '1px 2px 0 0')};
`;

const Grip = styled.div`
  flex: none;
  display: flex;
  flex-direction: ${p => (p.$vertical ? 'column' : 'row')};
  gap: 1px;
  ${p => (p.$vertical ? 'height: 9px; width: 20px; margin: 1px 0 0;' : 'width: 7px; height: 24px; margin: 0 2px;')}

  &::before,
  &::after {
    content: '';
    flex: 1;
    border: 1px solid;
    border-color: #fff ${shadow} ${shadow} #fff;
  }
`;

const Separator = styled.hr`
  flex: none;
  border: 0;
  ${p =>
    p.$vertical
      ? `width: 20px; height: 2px; margin: 2px 0; border-top: 1px solid ${shadow}; border-bottom: 1px solid #fff;`
      : `width: 2px; height: 20px; margin: 0 2px; border-left: 1px solid ${shadow}; border-right: 1px solid #fff;`}
`;

const ToolButton = styled.button`
  flex: none;
  display: flex;
  align-items: center;
  justify-content: center;
  width: ${p => (p.$narrow ? 13 : 23)}px;
  height: ${p => (p.$vertical ? 22 : 24)}px;
`;

const ComboBox = styled.label`
  ${sunken}
  border-color: ${dark} #fff #fff ${dark};
  outline: 1px solid ${shadow};
  outline-offset: -1px;
  display: flex;
  align-items: center;
  flex: none;
  width: ${p => p.$width}px;
  height: 22px;
  margin: 0 1px;
  padding: 1px 1px 1px 4px;
  color: ${shadow};
`;

const ComboSelect = styled.select`
  flex: 1;
  min-width: 0;
  appearance: none;
  font-size: 11px;
  line-height: 16px;

  &:disabled {
    color: ${shadow};
    opacity: 1;
  }
`;

const ComboArrow = styled.span`
  ${raised}
  display: flex;
  align-items: center;
  justify-content: center;
  width: 16px;
  height: 18px;
`;

const Swatch = styled.span`
  width: 10px;
  height: 10px;
  margin-right: 4px;
  border: 1px solid #000;
  background: #fff;
`;

const LineSample = styled.span`
  width: ${p => p.$width}px;
  height: 1px;
  margin-right: 6px;
  background: #000;
`;

const Indent = styled.span`
  width: 4px;
`;

const Combo = ({ label, width, children, value }) => (
  <ComboBox $width={width}>
    {children}
    <ComboSelect aria-label={label} disabled defaultValue={value}>
      <option>{value}</option>
    </ComboSelect>
    <ComboArrow>
      <Arrow dir="down" />
    </ComboArrow>
  </ComboBox>
);

// '|' is a separator, an element is placed as it is, any other entry is an icon name
const Toolbar = ({ items, vertical }) => (
  <Bar $vertical={vertical} role="toolbar">
    <Grip $vertical={vertical} />
    {items.map((item, i) => {
      if (item === '|') return <Separator key={i} $vertical={vertical} />;
      if (typeof item !== 'string') return React.cloneElement(item, { key: i });
      return (
        <ToolButton
          key={i}
          $vertical={vertical}
          $narrow={item === 'small'}
          aria-label={item}
        >
          <Icon name={item} />
        </ToolButton>
      );
    })}
  </Bar>
);

const LayerIcons = styled.span`
  display: flex;
  gap: 1px;
  margin-right: 1px;
`;

const standardBar = [
  'new', 'open', 'save', '|', 'print', 'preview', 'publish', '|',
  'cut', 'copy', 'paste', 'match', '|', 'undo', 'small', 'redo', 'small', '|',
  'pan', 'zoom', 'zoomwin', 'zoomprev', '|', 'props', 'center', 'palette', '|', 'help',
];

const stylesBar = [
  'textstyle',
  <Combo label="Text style" width={98} value="Standard" />,
  '|',
  'dimstyle',
  <Combo label="Dimension style" width={98} value="Standard" />,
];

const ucsBar = [
  'ucs', 'ucsdlg', '|', 'ucsprev', '|', 'ucsworld', 'ucsobj', 'ucsface', 'ucsview', '|',
  'ucsorigin', 'ucsz', 'ucs3', '|', 'ucsx', 'ucsy', 'ucszz', '|', 'ucsapply',
];

const layerBar = [
  'layers',
  <Combo label="Layer" width={299} value="0">
    <LayerIcons>
      {['bulb', 'sun', 'freeze', 'lock'].map(n => (
        <Icon key={n} name={n} />
      ))}
    </LayerIcons>
    <Swatch />
  </Combo>,
  'laycur',
  'layprev',
];

const propertiesBar = [
  <Combo label="Color" width={147} value="ByLayer"><Swatch /></Combo>,
  '|',
  <Combo label="Linetype" width={157} value="ByLayer"><LineSample $width={60} /></Combo>,
  '|',
  <Combo label="Lineweight" width={125} value="ByLayer"><LineSample $width={35} /></Combo>,
  '|',
  <Combo label="Plot style" width={117} value="ByColor"><Indent /></Combo>,
];

const expressBar = [
  'sheetset', '|', 'excel', 'dimtext', 'target', 'a1a4', 'calc', 'tank', 'solid', 'funnel',
];

const drawBar = [
  'line', 'xline', 'pline', 'polygon', 'rect', 'arc', 'circle', 'cloud', 'spline',
  'ellipse', 'earc', 'insert', 'block', 'point', 'hatch', 'region', 'mtext',
];

const inquiryBar = ['dist', 'area', 'mass', '|', 'list', 'id'];

const modifyBar = [
  'erase', 'copyobj', 'mirror', 'offset', 'array', 'move', 'rotate', 'scale', 'stretch',
  'trim', 'extend', 'breakpt', 'break', 'chamfer', 'fillet', 'explode',
];

const modify2Bar = [
  'order', '|', 'edhatch', 'edpline', 'edspline', '|', 'edattr', 'blkattr', 'sync', 'extract',
];

const dimensionBar = [
  'dlin', 'dali', 'dord', '|', 'drad', 'ddia', 'dang', '|', 'dquick', 'dbase', 'dcont', '|',
  'leader', 'tol', 'cmark', '|', 'dedit', 'dtedit', 'dupd', '|',
  <Combo label="Current dimension style" width={98} value="Standard" />,
  'dimstyle',
];

const textBar = ['txt', 'dtext', 'tedit', 'find', 'textstyle', 'tscale', 'tjust', 'tconv'];

const snapBar = [
  'track', 'from', '|', 'sEnd', 'sMid', 'sInt', 'sApp', 'sExt', '|', 'sCen', 'sQua', 'sTan', '|',
  'sPer', 'sPar', 'sIns', 'sNod', '|', 'sNea', 'sNone', '|', 'sSet',
];

/* ---------- document tabs ---------- */

const FileTabs = styled.div`
  display: flex;
  align-items: flex-end;
  height: 31px;
  border-top: 1px solid ${shadow};
  border-bottom: 1px solid #fff;
  box-shadow: inset 0 1px 0 #fff;
`;

const DockControls = styled.div`
  align-self: flex-start;
  display: flex;
  flex-direction: column;
  gap: 3px;
  width: 20px;
  padding: 5px 0 0 2px;

  i {
    width: 9px;
    height: 3px;
    margin-left: 1px;
    border: 1px solid;
    border-color: #fff ${shadow} ${shadow} #fff;
  }
`;

const CloseDock = styled.button`
  ${raised}
  display: flex;
  align-items: center;
  justify-content: center;
  width: 12px;
  height: 12px;
`;

const ScrollTabs = styled.button`
  width: 7px;
  height: 14px;
  margin: ${p => (p.$right ? '0 7px 3px auto' : '0 7px 3px 0')};
  background: ${shadow};
  clip-path: ${p => (p.$right ? 'polygon(0 0, 100% 50%, 0 100%)' : 'polygon(100% 0, 0 50%, 100% 100%)')};
`;

const Tab = styled.button`
  position: relative;
  isolation: isolate;
  z-index: ${p => (p.$active ? 1 : 0)};
  height: ${p => (p.$down ? 15 : 20)}px;
  margin-right: ${p => (p.$down ? -2 : -5)}px;
  padding: ${p => (p.$down ? '0 8px' : '0 10px')};
  font-size: 12px;
  font-weight: ${p => (p.$active ? 700 : 400)};
  line-height: ${p => (p.$down ? 14 : 18)}px;
  color: ${p => (p.$active && p.$down ? '#fff' : '#000')};

  &::before,
  &::after {
    content: '';
    position: absolute;
    z-index: -1;
    top: 0;
    bottom: 0;
    width: 50%;
    background: ${p => (p.$active ? (p.$down ? '#000' : '#848ca8') : face)};
    border: 0 solid #000;
    transform-origin: ${p => (p.$down ? '50% 0' : '50% 100%')};
    ${p => (p.$down ? 'border-bottom-width: 1px;' : 'border-top-width: 1px;')}
  }

  &::before {
    left: 0;
    border-left-width: 1px;
    transform: skewX(${p => (p.$down ? 20 : -20)}deg);
  }

  &::after {
    right: 0;
    border-right-width: 1px;
    transform: skewX(${p => (p.$down ? -20 : 20)}deg);
  }
`;

/* ---------- drawing area ---------- */

const Workspace = styled.main`
  flex: 1;
  display: flex;
  align-items: stretch;
  padding-top: 3px;
  min-height: 0;
`;

const SideDock = styled.aside`
  flex: none;
  display: flex;
  flex-direction: column;
  gap: 1px;
  width: 26px;
`;

const Document = styled.section`
  flex: 1;
  display: flex;
  flex-direction: column;
  min-width: 0;
  border: 1px solid;
  border-color: ${shadow} #fff #fff ${shadow};
  margin-right: 1px;
`;

const CanvasRow = styled.div`
  flex: 1;
  display: flex;
  min-height: 0;
  border-top: 1px solid ${dark};
`;

const Canvas = styled.svg`
  flex: 1;
  display: block;
  min-width: 0;
  height: 756px;
  background: #000;
`;

const ScrollTrack = styled.div`
  ${dither}
  flex: ${p => (p.$grow ? 1 : 'none')};
  display: flex;
  flex-direction: ${p => (p.$vertical ? 'column' : 'row')};
  ${p => (p.$vertical ? 'width: 18px;' : 'height: 16px;')}
`;

const ScrollSpace = styled.span`
  flex: ${p => p.$share};
`;

const ScrollButton = styled.button`
  ${raised}
  flex: none;
  display: flex;
  align-items: center;
  justify-content: center;
  width: ${p => p.$w || 18}px;
  height: ${p => p.$h || 17}px;
  overflow: hidden;
`;

const LayoutRow = styled.div`
  display: flex;
  height: 16px;
`;

const LayoutNav = styled.div`
  display: flex;
  margin: 0 3px 0 1px;

  button {
    width: 18px;
    height: 15px;
    display: flex;
    align-items: center;
    justify-content: center;
    border: 1px solid;
    border-color: #fff ${shadow} ${shadow} #fff;
  }
`;

const LayoutScroll = styled.div`
  display: flex;
  margin-left: auto;
  width: 451px;
`;

const Splitter = styled.span`
  ${raised}
  width: 5px;
`;

const Corner = styled.span`
  width: 18px;
`;

const floor = 518;
const vessels = [
  {
    cx: 121, r: 90, tick: 519, rows: [[473, [56, 89, 121, 153, 186]], [441, [76, 121, 166]]],
    tip: [144, 432], elbow: [151, 404], text: [166, 410], label: 'R138.92443989',
  },
  {
    cx: 335, r: 103, tick: 513, rows: [[473, [254, 287, 319, 351, 384, 416]], [428, [287, 319, 351, 384]]],
    tip: [354, 418], elbow: [359, 393], text: [373, 399], label: 'R158.82380174',
  },
  {
    cx: 594, r: 107, tick: 519, rows: [[473, [497, 530, 562, 594, 627, 659, 691]], [428, [546, 578, 610, 643]]],
    tip: [631, 418], elbow: [641, 390], text: [657, 396], label: 'R165.52945357',
  },
  {
    cx: 850, r: 112, tick: 519, rows: [[473, [753, 786, 818, 850, 883, 915, 947]], [428, [786, 818, 850, 883, 915]]],
    tip: [885, 413], elbow: [894, 383], text: [909, 389], label: 'R172.04650534',
  },
  {
    cx: 1137, r: 125, tick: 513, rows: [[473, [1056, 1089, 1121, 1153, 1186, 1218]], [428, [1056, 1089, 1121, 1153, 1186, 1218]], [396, [1114, 1160]]],
    tip: [1192, 406], elbow: [1204, 385], text: [1216, 391], label: 'R193.19679086',
  },
];

const CadText = styled.text`
  fill: #fff;
  stroke: none;
  font: 200 ${p => p.$size || 17}px ${wideFont};
`;

const Vessel = ({ cx, r, tick, rows, tip, elbow, text, label }) => {
  const dx = elbow[0] - tip[0];
  const dy = elbow[1] - tip[1];
  const len = Math.hypot(dx, dy);
  const [ux, uy] = [dx / len, dy / len];
  const [bx, by] = [tip[0] + ux * 12, tip[1] + uy * 12];
  const grid = rows
    .map(([top, xs], i) => {
      const bottom = i ? rows[i - 1][0] : floor;
      return `M${xs[0]} ${top}H${xs[xs.length - 1]}${xs.map(x => `M${x} ${top}V${bottom}`).join('')}`;
    })
    .join('');
  return (
    <g>
      <circle cx={cx} cy={floor + 0.5} r={r} />
      <path d={grid} />
      <path d={`M${cx} ${tick}V525`} />
      <path d={`M${tip[0]} ${tip[1]}L${elbow[0]} ${elbow[1]}H${text[0] - 3}`} />
      <path
        fill="#fff"
        stroke="none"
        d={`M${tip[0]} ${tip[1]}L${bx - uy * 3} ${by + ux * 3}L${bx + uy * 3} ${by - ux * 3}Z`}
      />
      <CadText x={text[0]} y={text[1]}>{label}</CadText>
    </g>
  );
};

const Model = () => (
  <Canvas viewBox="27 133 1327 756" role="img" aria-label="Model space">
    <g transform="translate(0.5 0.5)" fill="none" stroke="#fff" strokeWidth="1" shapeRendering="crispEdges">
      <path d={`M31 ${floor}H1262`} />
      {vessels.map(v => (
        <Vessel key={v.label} {...v} />
      ))}
      <rect x="113" y="133" width="6" height="5" />
      <rect x="43" y="856" width="14" height="15" />
      <path d="M50 856V791M43 791H58L50 774ZM57 864H123M123 857V870L141 864Z" />
      <path d="M47 790L50 776L53 790M124 861L139 864L124 867" stroke="#888" />
      <CadText x="44" y="761" $size={24}>Y</CadText>
      <CadText x="154" y="873" $size={24}>X</CadText>
    </g>
  </Canvas>
);

/* ---------- command line ---------- */

const BottomTools = styled(ToolRow)`
  margin-top: 1px;
`;

const CommandDock = styled.section`
  display: flex;
  padding: 4px 7px 0 3px;
  border-top: 1px solid #fff;
  box-shadow: inset 0 3px 0 ${face}, inset 0 4px 0 #000;
  height: 61px;
`;

const CommandGrip = styled(Grip)`
  height: 42px;
  margin: 8px 4px 0 3px;
`;

const CommandBox = styled.div`
  flex: 1;
  min-width: 0;
  margin-top: 5px;
  border-left: 1px solid #000;
  border-top: 1px solid #000;
`;

const History = styled.div`
  display: flex;
  height: 31px;
  background: #fff;
  border-bottom: 1px solid ${shadow};

  pre {
    flex: 1;
    margin: 0;
    padding: 0 0 0 1px;
    font: 14px/14px ${monoFont};
  }
`;

const PromptRow = styled.div`
  display: flex;
  height: 18px;
  border-bottom: 1px solid ${face};
`;

const Prompt = styled.input`
  flex: 1;
  min-width: 0;
  padding: 0 0 0 1px;
  background: #fff;
  font: 15px/17px ${monoFont};
`;

const PromptScroll = styled.div`
  ${dither}
  display: flex;
  width: 67px;
  margin: 0 19px 0 4px;
  height: 15px;
`;

/* ---------- status bar ---------- */

const StatusBar = styled.footer`
  display: flex;
  align-items: center;
  gap: 4px;
  height: 23px;
  padding: 2px 3px 0 5px;
  border-top: 1px solid ${shadow};
  box-shadow: inset 0 1px 0 #fff;
`;

const Coordinates = styled.output`
  ${sunken}
  border-color: ${shadow};
  width: 238px;
  height: 19px;
  margin-right: 1px;
  padding-left: 1px;
  font-size: 11px;
  line-height: 17px;
  white-space: pre;
`;

const Toggle = styled.button`
  height: 19px;
  padding: 0 1px;
  border: 1px solid;
  border-color: ${p => (p.$on ? '#000 #fff #fff #000' : `#fff ${shadow} ${shadow} #fff`)};
  ${p => p.$on && dither}
  font-size: 12px;
  line-height: 17px;
`;

const toggles = [
  ['捕捉', false],
  ['栅格', false],
  ['正交', true],
  ['极轴', false],
  ['对象捕捉', true],
  ['对象追踪', true],
  ['线宽', false],
  ['模型', true],
];

const Comm = styled.button`
  ${sunken}
  display: flex;
  align-items: center;
  justify-content: center;
  width: 24px;
  height: 19px;
  margin-left: auto;
`;

const StatusMenu = styled.button`
  width: 8px;
  height: 4px;
  margin: 6px 0 0;
  background: #000;
  clip-path: polygon(0 0, 100% 0, 50% 100%);
`;

/* ---------- taskbar ---------- */

const Taskbar = styled.nav`
  display: flex;
  align-items: center;
  height: 31px;
  padding: 1px 2px 2px;
  border-top: 1px solid #fff;
  font-family: ${taskFont};
  font-size: 16px;
  font-weight: 300;
`;

const Start = styled.button`
  ${raised}
  display: flex;
  align-items: center;
  width: 56px;
  height: 25px;
  padding-left: 1px;
  font-size: 15px;
`;

const QuickLaunch = styled.div`
  display: flex;
  gap: 7px;
  width: 183px;
  padding-left: 9px;
`;

const QuickButton = styled.button`
  display: flex;
`;

const Tasks = styled.div`
  flex: 1;
  display: flex;
  gap: 3px;
  min-width: 0;
`;

const Task = styled.button`
  ${raised}
  flex: 0 1 119px;
  min-width: 0;
  display: flex;
  align-items: center;
  gap: 4px;
  height: 25px;
  padding: 0 4px;
  font-size: 15px;
  white-space: nowrap;
  overflow: hidden;
  ${p =>
    p.$active &&
    css`
      ${dither}
      border-color: ${dark} #fff #fff ${dark};
      box-shadow: inset 1px 1px 0 ${shadow};
    `}
`;

const tasks = [
  ['max', 'CA D几何...'],
  ['folder', 'FlashFXP_...'],
  ['folder', '曲面'],
  ['folder', 'Basquash'],
  ['folder', '3000t'],
  ['thunder', '迅雷5'],
  ['acad', 'AutoCAD ...'],
];

const Divider = styled(Separator)`
  height: 25px;
  margin: 0;
`;

const Battery = styled.div`
  width: 69px;
  height: 20px;
  margin: 0 12px 0 5px;
  border: 1px solid;
  border-color: #cfc ${dark} ${dark} #cfc;
  border-right-width: 3px;
  background: #7cf73c;
  font: 400 16px/18px ${wideFont};
  text-align: center;
`;

const Tray = styled.div`
  ${sunken}
  display: flex;
  align-items: center;
  gap: 3px;
  height: 25px;
  margin-left: 10px;
  padding: 0 17px 0 5px;

  span {
    margin-right: 4px;
  }

  time {
    margin-left: 9px;
  }
`;

const WindowStack = () => (
  <IconSvg viewBox="0 0 10 18" $size={18} aria-hidden="true">
    <path d="M4 3V1H9V5H7M2 3H7V7H2Z" fill="none" stroke="#000" strokeWidth="1.200" />
    <path d="M2 13H8L5 16Z" />
  </IconSvg>
);

const App = () => (
  <>
    <GlobalStyle />
    <Window>
      <TitleBar>
        <Icon name="acad" size={17} />
        <Title>AutoCAD 2004 - [C:\Documents and Settings\Administrator\Desktop\Drawing1.dwg]</Title>
        <WindowButtons />
      </TitleBar>

      <MenuBar>
        <Icon name="dwg" size={15} />
        <MenuList>
          {menus.map(([label, key]) => (
            <MenuItem key={key}>
              {label}
              <span>(<u>{key}</u>)</span>
            </MenuItem>
          ))}
        </MenuList>
        <WindowButtons small />
      </MenuBar>

      <ToolRow>
        <Toolbar items={standardBar} />
        <Toolbar items={stylesBar} />
        <Toolbar items={ucsBar} />
      </ToolRow>
      <ToolRow>
        <Toolbar items={layerBar} />
        <Toolbar items={propertiesBar} />
        <Toolbar items={expressBar} />
      </ToolRow>

      <FileTabs>
        <DockControls>
          <CloseDock aria-label="Close panel">
            <IconSvg viewBox="0 0 12 12" $size={8}>
              <path d="M1 1L11 11M11 1L1 11" stroke="#000" strokeWidth="2.400" />
            </IconSvg>
          </CloseDock>
          <i />
        </DockControls>
        <ScrollTabs aria-label="Previous tab" />
        <Tab $active>Drawing1</Tab>
        <Tab>铰点力-1025</Tab>
        <ScrollTabs $right aria-label="Next tab" />
      </FileTabs>

      <Workspace>
        <SideDock>
          <Toolbar vertical items={drawBar} />
          <Toolbar vertical items={inquiryBar} />
        </SideDock>
        <Document>
          <CanvasRow>
            <Model />
            <ScrollTrack $vertical>
              <ScrollButton aria-label="Scroll up"><Arrow dir="up" /></ScrollButton>
              <ScrollSpace $share={352} />
              <ScrollButton aria-label="Vertical position" />
              <ScrollSpace $share={352} />
              <ScrollButton aria-label="Scroll down"><Arrow dir="down" /></ScrollButton>
            </ScrollTrack>
          </CanvasRow>
          <LayoutRow>
            <LayoutNav>
              {['first', 'prev', 'next', 'last'].map(dir => (
                <button key={dir} aria-label={dir}><Arrow dir={dir} /></button>
              ))}
            </LayoutNav>
            <Tab $down $active>模型</Tab>
            <Tab $down>布局1</Tab>
            <Tab $down>布局2</Tab>
            <LayoutScroll>
              <Splitter />
              <ScrollTrack $grow>
                <ScrollButton $h={15} aria-label="Scroll left"><Arrow dir="left" /></ScrollButton>
                <ScrollSpace $share={195} />
                <ScrollButton $h={15} aria-label="Horizontal position" />
                <ScrollSpace $share={196} />
                <ScrollButton $h={15} aria-label="Scroll right"><Arrow dir="right" /></ScrollButton>
              </ScrollTrack>
            </LayoutScroll>
            <Corner />
          </LayoutRow>
        </Document>
        <SideDock>
          <Toolbar vertical items={modifyBar} />
          <Toolbar vertical items={modify2Bar} />
        </SideDock>
      </Workspace>

      <BottomTools>
        <Toolbar items={dimensionBar} />
        <Toolbar items={textBar} />
        <Toolbar items={snapBar} />
      </BottomTools>

      <CommandDock>
        <CommandGrip />
        <CommandBox>
          <History>
            <pre>{'命令:\n命令:'}</pre>
            <ScrollTrack $vertical>
              <ScrollButton $h={15} aria-label="History up"><Arrow dir="up" /></ScrollButton>
              <ScrollButton $h={15} aria-label="History down"><Arrow dir="down" /></ScrollButton>
            </ScrollTrack>
          </History>
          <PromptRow>
            <Prompt aria-label="Command" defaultValue="命令: _export 选择对象或 <全部对象和视口>:" />
            <PromptScroll>
              <ScrollButton $h={15} $w={17} aria-label="Prompt left"><Arrow dir="left" /></ScrollButton>
              <ScrollButton $h={15} $w={17} aria-label="Prompt position" />
              <ScrollSpace $share={1} />
              <ScrollButton $h={15} $w={17} aria-label="Prompt right"><Arrow dir="right" /></ScrollButton>
            </PromptScroll>
          </PromptRow>
        </CommandBox>
      </CommandDock>

      <StatusBar>
        <Coordinates>519.0956,  598.5128 , 0.0000</Coordinates>
        {toggles.map(([label, on]) => (
          <Toggle key={label} $on={on} aria-pressed={on}>{label}</Toggle>
        ))}
        <Comm aria-label="Communication center"><Icon name="dish" /></Comm>
        <StatusMenu aria-label="Status bar menu" />
      </StatusBar>

      <Taskbar>
        <Start><Icon name="win" size={18} />Start</Start>
        <QuickLaunch>
          {['desk', 'max', 'ie', 'outlook', 'pda', 'parrot'].map(n => (
            <QuickButton key={n} aria-label={n}><Icon name={n} size={18} /></QuickButton>
          ))}
        </QuickLaunch>
        <Tasks>
          {tasks.map(([icon, label]) => (
            <Task key={label} $active={icon === 'acad'}>
              <Icon name={icon} size={17} />
              {label}
            </Task>
          ))}
        </Tasks>
        <Divider />
        <WindowStack />
        <Battery>100%</Battery>
        <Icon name="plug" size={18} />
        <Tray>
          <span>«</span>
          {['thunder', 'signal', 'net', 'disk'].map(n => (
            <Icon key={n} name={n} size={17} />
          ))}
          <time>4:58</time>
        </Tray>
      </Taskbar>
    </Window>
  </>
);

export default App;
